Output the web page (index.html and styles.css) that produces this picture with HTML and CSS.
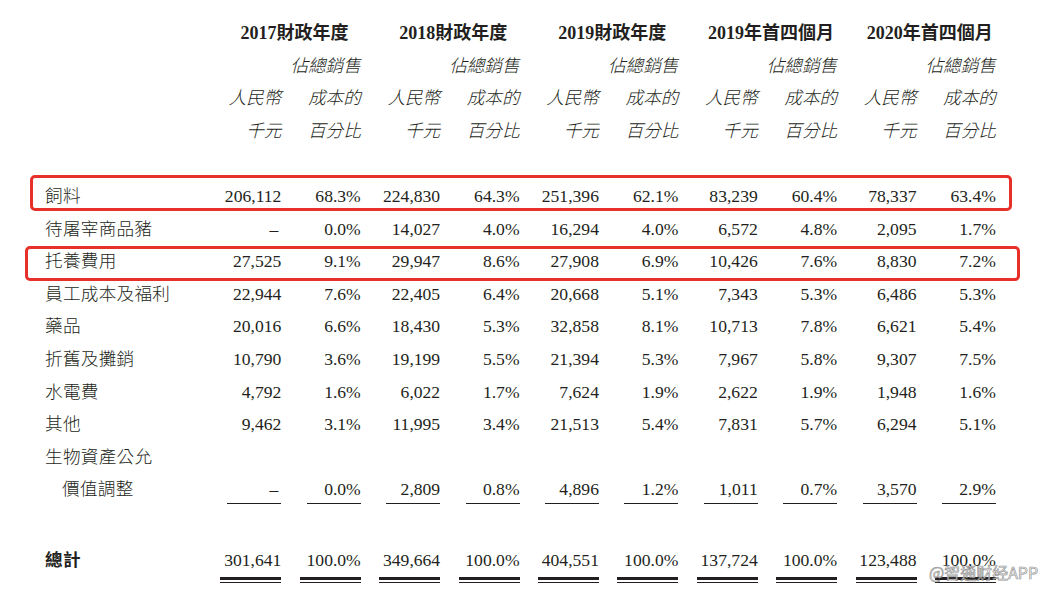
FILE: index.html
```html
<!DOCTYPE html>
<html lang="zh-Hant">
<head>
<meta charset="utf-8">
<link rel="stylesheet" href="styles.css">
</head>
<body>
<div class="sheet">
  <div class="row head-years">
    <div></div>
    <div class="yr">2017財政年度</div>
    <div class="yr">2018財政年度</div>
    <div class="yr">2019財政年度</div>
    <div class="yr">2019年首四個月</div>
    <div class="yr">2020年首四個月</div>
  </div>
  <div class="row head-sub">
    <div></div>
    <div></div><div>佔總銷售</div>
    <div></div><div>佔總銷售</div>
    <div></div><div>佔總銷售</div>
    <div></div><div>佔總銷售</div>
    <div></div><div>佔總銷售</div>
  </div>
  <div class="row head-sub">
    <div></div>
    <div>人民幣</div><div>成本的</div>
    <div>人民幣</div><div>成本的</div>
    <div>人民幣</div><div>成本的</div>
    <div>人民幣</div><div>成本的</div>
    <div>人民幣</div><div>成本的</div>
  </div>
  <div class="row head-sub">
    <div></div>
    <div>千元</div><div>百分比</div>
    <div>千元</div><div>百分比</div>
    <div>千元</div><div>百分比</div>
    <div>千元</div><div>百分比</div>
    <div>千元</div><div>百分比</div>
  </div>
  <div class="spacer"></div>

  <div class="row"><div class="label">飼料</div><div>206,112</div><div>68.3%</div><div>224,830</div><div>64.3%</div><div>251,396</div><div>62.1%</div><div>83,239</div><div>60.4%</div><div>78,337</div><div>63.4%</div></div>
  <div class="row"><div class="label">待屠宰商品豬</div><div class="dash">–</div><div>0.0%</div><div>14,027</div><div>4.0%</div><div>16,294</div><div>4.0%</div><div>6,572</div><div>4.8%</div><div>2,095</div><div>1.7%</div></div>
  <div class="row"><div class="label">托養費用</div><div>27,525</div><div>9.1%</div><div>29,947</div><div>8.6%</div><div>27,908</div><div>6.9%</div><div>10,426</div><div>7.6%</div><div>8,830</div><div>7.2%</div></div>
  <div class="row"><div class="label">員工成本及福利</div><div>22,944</div><div>7.6%</div><div>22,405</div><div>6.4%</div><div>20,668</div><div>5.1%</div><div>7,343</div><div>5.3%</div><div>6,486</div><div>5.3%</div></div>
  <div class="row"><div class="label">藥品</div><div>20,016</div><div>6.6%</div><div>18,430</div><div>5.3%</div><div>32,858</div><div>8.1%</div><div>10,713</div><div>7.8%</div><div>6,621</div><div>5.4%</div></div>
  <div class="row"><div class="label">折舊及攤銷</div><div>10,790</div><div>3.6%</div><div>19,199</div><div>5.5%</div><div>21,394</div><div>5.3%</div><div>7,967</div><div>5.8%</div><div>9,307</div><div>7.5%</div></div>
  <div class="row"><div class="label">水電費</div><div>4,792</div><div>1.6%</div><div>6,022</div><div>1.7%</div><div>7,624</div><div>1.9%</div><div>2,622</div><div>1.9%</div><div>1,948</div><div>1.6%</div></div>
  <div class="row"><div class="label">其他</div><div>9,462</div><div>3.1%</div><div>11,995</div><div>3.4%</div><div>21,513</div><div>5.4%</div><div>7,831</div><div>5.7%</div><div>6,294</div><div>5.1%</div></div>
  <div class="row"><div class="label">生物資產公允</div></div>
  <div class="row ul"><div class="label indent">價值調整</div><div><span class="dash">–</span></div><div><span>0.0%</span></div><div><span>2,809</span></div><div><span>0.8%</span></div><div><span>4,896</span></div><div><span>1.2%</span></div><div><span>1,011</span></div><div><span>0.7%</span></div><div><span>3,570</span></div><div><span>2.9%</span></div></div>
  <div class="gap"></div>
  <div class="row total"><div class="label">總計</div><div><span>301,641</span></div><div><span>100.0%</span></div><div><span>349,664</span></div><div><span>100.0%</span></div><div><span>404,551</span></div><div><span>100.0%</span></div><div><span>137,724</span></div><div><span>100.0%</span></div><div><span>123,488</span></div><div><span>100.0%</span></div></div>

  <div class="box box-feed"></div>
  <div class="box box-care"></div>
  <div class="watermark">@智通财经APP</div>
</div>
</body>
</html>
```

FILE: styles.css
```css
* { box-sizing: border-box; margin: 0; padding: 0; }

html, body {
  background: #ffffff;
}

body {
  width: 1048px;
  height: 591px;
  overflow: hidden;
  font-family: "Liberation Serif", "Noto Sans CJK TC", serif;
  font-size: 17.6px;
  font-weight: 300;
  color: #231f20;
}

.sheet {
  position: relative;
  padding: 17px 0 0 44px;
  height: 591px;
}

.row {
  display: grid;
  grid-template-columns: 158px repeat(10, 61px);
  column-gap: 18.4px;
  height: 32.6px;
  line-height: 32.6px;
}

.row > div {
  display: flex;
  justify-content: flex-end;
  white-space: nowrap;
}

.row > .label {
  justify-content: flex-start;
  padding-left: 1px;
  letter-spacing: 0.3px;
}

.row > .indent {
  padding-left: 18px;
}

.dash {
  padding-right: 3px;
}

.yr {
  grid-column: span 2;
  justify-content: center !important;
  padding-left: 8px;
  font-weight: bold;
  font-size: 18px;
}

.head-sub {
  font-style: italic;
}

.spacer {
  height: 32.6px;
}

.gap {
  height: 38px;
}

.ul > div {
  align-items: flex-start;
}

.ul > div > span {
  display: block;
  width: 54px;
  height: 31px;
  text-align: right;
  border-bottom: 1px solid #231f20;
}

.total .label {
  font-weight: bold;
}

.total > div > span {
  display: block;
  width: 61px;
  height: 39px;
  text-align: right;
  background:
    linear-gradient(#231f20, #231f20) 0 32.6px / 100% 3px no-repeat,
    linear-gradient(#231f20, #231f20) 0 38px / 100% 1px no-repeat;
}

.box {
  position: absolute;
  border: 3px solid #e8302a;
  border-radius: 5px;
}

.box-feed {
  left: 30px;
  top: 175px;
  width: 982px;
  height: 36px;
}

.box-care {
  left: 25px;
  top: 246px;
  width: 995px;
  height: 35px;
}

.watermark {
  position: absolute;
  left: 929px;
  top: 561px;
  font-family: "Noto Sans CJK SC", "Noto Sans", sans-serif;
  font-size: 16px;
  font-weight: 400;
  line-height: 22px;
  color: rgba(255, 255, 255, 0.75);
  -webkit-text-stroke: 0.7px rgba(120, 120, 120, 0.8);
}
```
